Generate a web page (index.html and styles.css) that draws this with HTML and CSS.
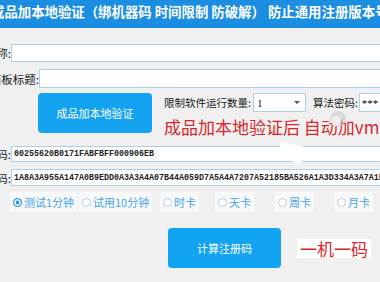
FILE: index.html
```html
<!DOCTYPE html>
<html>
<head>
	<meta charset="utf-8">
	<title>成品加本地验证</title>
	<link rel="stylesheet" href="styles.css">
</head>
<body>
	<div class="page">
		<div class="title">成品加本地验证（绑机器码 时间限制 防破解） 防止通用注册版本号</div>

		<div class="form">
			<div class="row r1">
				<label class="lbl w11"><span>软件名称:</span></label>
				<input class="field" value="">
			</div>
			<div class="row r2">
				<label class="lbl w39"><span>面板标题:</span></label>
				<input class="field" value="">
			</div>

			<div class="mid">
				<button class="btn btn-verify">成品加本地验证</button>
				<div class="mid-right">
					<div class="opts">
						<span>限制软件运行数量:</span>
						<div class="select"><span>1</span><i class="caret"></i></div>
						<span class="pwd-lbl">算法密码:</span>
						<input class="field pwd" value="***">
					</div>
					<div class="note">成品加本地验证后 自动加vmp壳</div>
				</div>
			</div>

			<div class="row code1">
				<label class="lbl w11"><span>机器码:</span></label>
				<input class="field mono" value="00255620B0171FABFBFF000906EB">
			</div>
			<div class="row code2">
				<label class="lbl w11"><span>注册码:</span></label>
				<input class="field mono" value="1A8A3A955A147A0B9EDD0A3A3A4A07B44A059D7A5A4A7207A52185BA526A1A3D334A3A7A1F">
			</div>

			<div class="radios">
				<label class="radio"><i class="dot on"></i>测试1分钟</label>
				<label class="radio"><i class="dot"></i>试用10分钟</label>
				<label class="radio"><i class="dot"></i>时卡</label>
				<label class="radio"><i class="dot"></i>天卡</label>
				<label class="radio"><i class="dot"></i>周卡</label>
				<label class="radio"><i class="dot"></i>月卡</label>
			</div>

			<div class="actions">
				<button class="btn btn-calc">计算注册码</button>
				<span class="slogan">一机一码</span>
			</div>
		</div>
	</div>

	<!-- 水印 -->
	<svg class="mark" width="380" height="282" viewBox="0 0 380 282">
		<ellipse cx="338" cy="119" rx="8" ry="8" fill="#c9c9c9" opacity="0.55"/>
		<ellipse cx="336" cy="121" rx="5" ry="5" fill="#f4f4f4" opacity="0.8"/>
		<polygon points="282,142 314,149 299,165 277,152" fill="#ffffff" opacity="0.9"/>
	</svg>
</body>
</html>
```

FILE: styles.css
```css
body{
	margin: 0;
	width: 380px;
	height: 282px;
	overflow: hidden;
	position: relative;
	background: #f0f0f0;
	font-family: "Noto Sans CJK SC", sans-serif;
	color: #1a1a1a;
}
.page{
	width: 430px;
}
.title{
	height: 28px;
	line-height: 23px;
	background: #1b8ee2;
	color: #fff;
	font-size: 13.4px;
	font-weight: bold;
	white-space: nowrap;
	overflow: hidden;
	text-indent: -9px;
}
.form{
	padding-top: 16px;
}
.row{
	display: flex;
	align-items: center;
}
.lbl{
	flex: none;
	display: flex;
	justify-content: flex-end;
	overflow: hidden;
	white-space: nowrap;
	font-size: 11.5px;
}
.w11{
	width: 11px;
}
.w39{
	width: 39px;
}
.field{
	flex: 1;
	min-width: 0;
	box-sizing: border-box;
	margin: 0;
	padding: 0 2px;
	border: 1px solid #a6d2ec;
	background: #fff;
	outline: none;
}
.r1 .field{
	height: 18px;
}
.r2{
	margin-top: 7px;
}
.r2 .field{
	height: 19px;
}
.mid{
	display: flex;
	margin-top: 5px;
	padding-left: 38px;
}
.btn{
	border: 0;
	padding: 0;
	border-radius: 4px;
	background: #14a3f1;
	color: #fff;
	font-family: inherit;
	font-size: 11px;
}
.btn-verify{
	width: 114px;
	height: 40px;
}
.mid-right{
	margin-left: 12px;
}
.opts{
	display: flex;
	align-items: center;
	height: 19px;
	font-size: 10.5px;
}
.select{
	box-sizing: border-box;
	width: 53px;
	height: 19px;
	margin-left: 2px;
	padding: 0 5px 0 3px;
	border: 1px solid #a6d2ec;
	background: #fff;
	display: flex;
	align-items: center;
	justify-content: space-between;
	font-family: "Liberation Serif", serif;
	font-size: 11px;
}
.caret{
	width: 0;
	height: 0;
	border-left: 3px solid transparent;
	border-right: 3px solid transparent;
	border-top: 3px solid #555;
}
.pwd-lbl{
	margin-left: 7px;
}
.pwd{
	flex: none;
	width: 40px;
	height: 19px;
	margin-left: 1px;
	font-family: "Liberation Serif", serif;
	font-size: 11px;
}
.note{
	margin-top: 4px;
	line-height: 22px;
	font-size: 17px;
	color: #d5282b;
	white-space: nowrap;
}
.code1{
	margin-top: 8px;
}
.code1 .field{
	height: 16px;
}
.code2{
	margin-top: 7px;
}
.code2 .field{
	height: 17px;
}
.mono{
	font-family: "Liberation Mono", monospace;
	font-size: 8.33px;
	font-weight: bold;
	color: #222;
}
.radios{
	display: grid;
	grid-template-columns: 69px 81px 55px 60px 59px auto;
	margin-top: 6px;
	padding-left: 10px;
}
.radio{
	justify-self: start;
	display: inline-flex;
	align-items: center;
	height: 20px;
	padding: 0 3px;
	background: #f8f8f8;
	font-size: 11px;
	color: #46a5ea;
	white-space: nowrap;
}
.dot{
	box-sizing: border-box;
	width: 9px;
	height: 9px;
	margin-right: 2px;
	border: 1px solid #b5cde0;
	border-radius: 50%;
	background: #fff;
}
.dot.on{
	border-color: #2a95e8;
	background: #2a95e8;
	box-shadow: inset 0 0 0 1.5px #fff;
}
.actions{
	display: flex;
	align-items: center;
	margin-top: 16px;
	padding-left: 168px;
}
.btn-calc{
	width: 113px;
	height: 40px;
}
.slogan{
	margin-left: 16px;
	padding: 0 3px;
	line-height: 19px;
	background: #fff;
	font-size: 17px;
	color: #d9262b;
}
.mark{
	position: absolute;
	left: 0;
	top: 0;
	pointer-events: none;
}
```
